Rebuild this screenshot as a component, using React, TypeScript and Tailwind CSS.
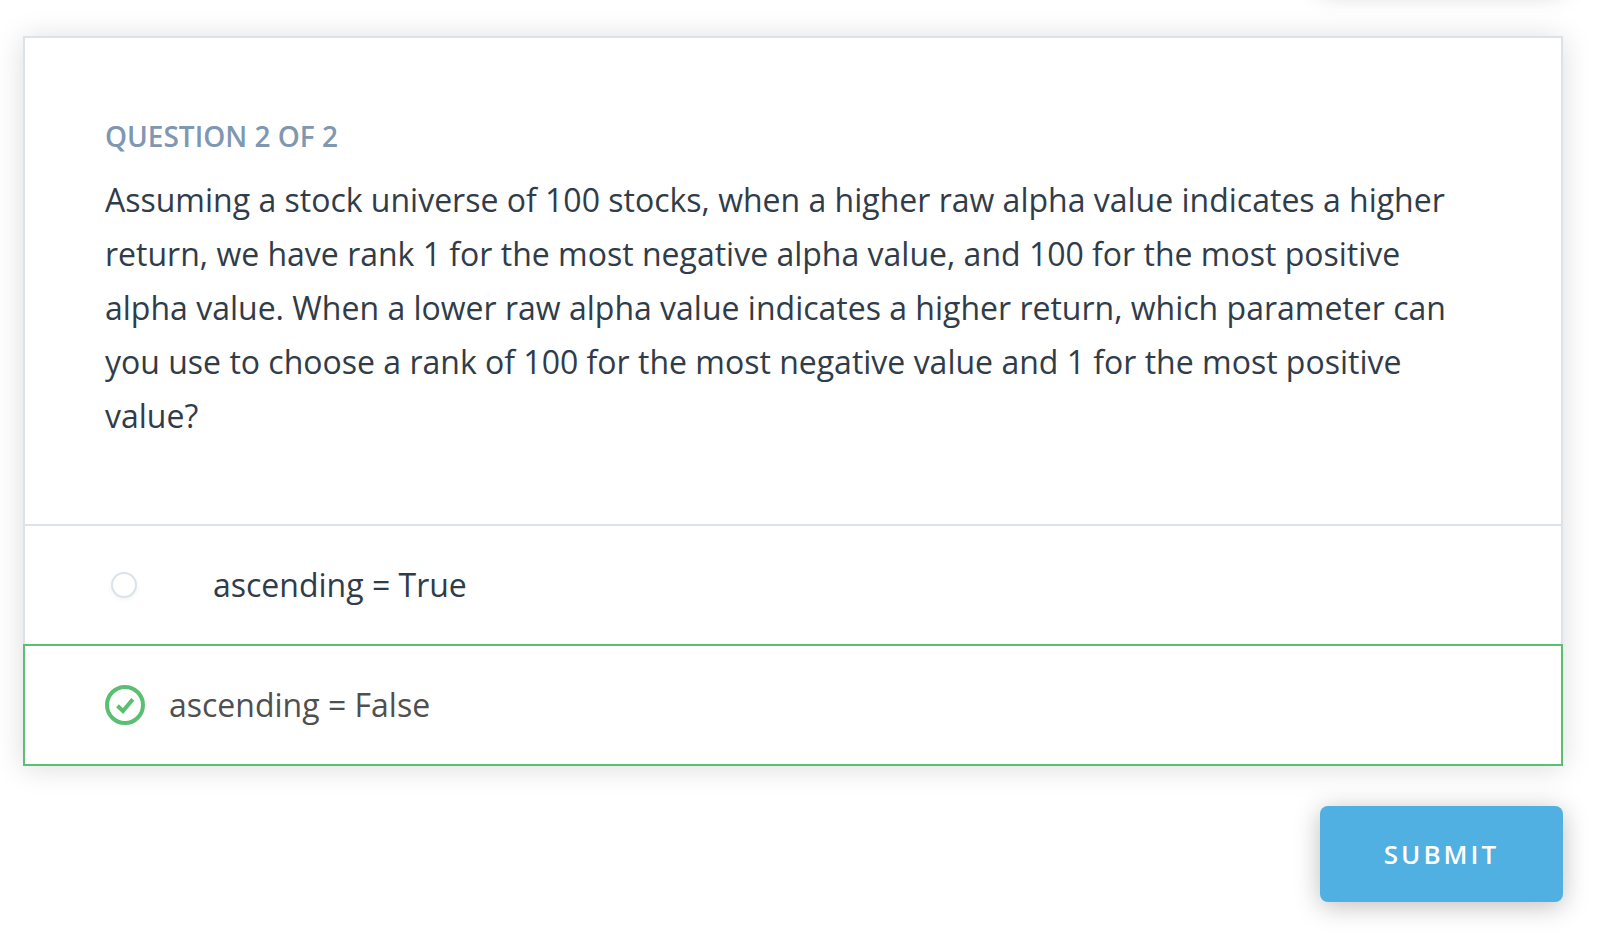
import { useState } from "react";

const BUTTON_SHADOW = "shadow-[0_4px_26px_rgba(0,0,0,0.26)]";

function CheckBadge() {
  return (
    <svg className="size-10 shrink-0" viewBox="0 0 40 40" fill="none" aria-hidden="true">
      <circle cx="20" cy="20" r="18" stroke="#5abf73" strokeWidth="4" />
      <path d="M12.5 20.8 L18 26 L27.8 14.2" stroke="#5abf73" strokeWidth="4" />
    </svg>
  );
}

export default function App() {
  const [choice, setChoice] = useState("false");
  const options = [
    { id: "true", label: "ascending = True" },
    { id: "false", label: "ascending = False" },
  ];

  return (
    <main className="flex flex-col overflow-hidden bg-white pr-[42px] pb-8 pl-[23px] font-['Open_Sans',sans-serif] text-[32px] leading-[54px] text-[#303c49]">
      <div aria-hidden="true" className={`-mt-[110px] h-24 w-[243px] self-end rounded-lg ${BUTTON_SHADOW}`} />
      <form className="mt-[50px] flex flex-col" onSubmit={(e) => e.preventDefault()}>
        <fieldset className="relative bg-white shadow-[0_2px_28px_rgba(0,0,0,0.14)]">
          <div className="border-2 border-[#dbe2e8] px-20 pt-20 pb-[81px]">
            <h2 className="mb-[19px] text-[28px] leading-9 font-semibold text-[#8097b1]">QUESTION 2 OF 2</h2>
            <p>
              Assuming a stock universe of 100 stocks, when a higher raw alpha value indicates a higher return, we have
              rank 1 for the most negative alpha value, and 100 for the most positive alpha value. When a lower raw alpha
              value indicates a higher return, which parameter can you use to choose a rank of 100 for the most negative
              value and 1 for the most positive value?
            </p>
          </div>
          {options.map((option) => {
            const selected = choice === option.id;
            return (
              <label
                key={option.id}
                htmlFor={option.id}
                className={
                  selected
                    ? "flex cursor-pointer items-center gap-6 border-2 border-[#5abf73] px-20 py-8 text-[#4f4f4f]"
                    : "flex cursor-pointer items-center gap-[76px] border-x-2 border-[#dbe2e8] px-[86px] py-8"
                }
              >
                <input
                  id={option.id}
                  type="radio"
                  name="parameter"
                  checked={selected}
                  onChange={() => setChoice(option.id)}
                  className={
                    selected
                      ? "sr-only"
                      : "size-[26px] shrink-0 appearance-none rounded-full border-2 border-[#dbe2e8] bg-white shadow-[0_2px_4px_rgba(46,60,73,0.06)]"
                  }
                />
                {selected && <CheckBadge />}
                <span>{option.label}</span>
              </label>
            );
          })}
        </fieldset>
        <button
          type="submit"
          className={`mt-10 h-24 w-[243px] cursor-pointer self-end rounded-lg bg-[#4fb0e1] text-[26px] leading-9 font-semibold tracking-[3px] text-white ${BUTTON_SHADOW}`}
        >
          SUBMIT
        </button>
      </form>
    </main>
  );
}
